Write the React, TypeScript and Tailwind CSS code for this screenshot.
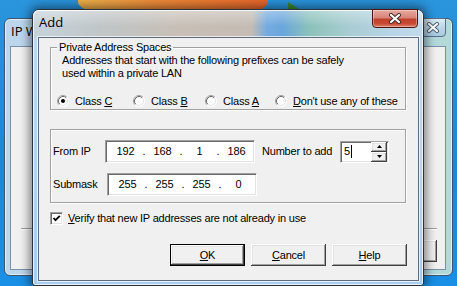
import React from 'react';

const ui = "[font-family:'Liberation_Sans',Arial,sans-serif] text-[11px] leading-[13px] tracking-[-0.2px] text-black";
const sunken =
  'bg-white border border-t-[#a0a0a0] border-l-[#a0a0a0] border-b-white border-r-white shadow-[inset_1px_1px_0_#696969,inset_-1px_-1px_0_#e3e3e3]';
const raised =
  'bg-[#f0f0f0] shadow-[inset_-1px_-1px_0_#404040,inset_1px_1px_0_#ffffff,inset_-2px_-2px_0_#a0a0a0,inset_2px_2px_0_#e3e3e3]';

const Radio = ({ checked }: { checked?: boolean }) => (
  <svg width="12" height="12" viewBox="0 0 12 12" className="shrink-0">
    <circle cx="6" cy="6" r="5.5" fill="#fff" />
    <path d="M2.11 9.89A5.5 5.5 0 0 1 9.89 2.11" fill="none" stroke="#a0a0a0" />
    <path d="M9.89 2.11A5.5 5.5 0 0 1 2.11 9.89" fill="none" stroke="#ffffff" />
    <path d="M2.82 9.18A4.5 4.5 0 0 1 9.18 2.82" fill="none" stroke="#696969" />
    <path d="M9.18 2.82A4.5 4.5 0 0 1 2.82 9.18" fill="none" stroke="#e3e3e3" />
    {checked && <circle cx="6" cy="6" r="2" fill="#000" />}
  </svg>
);

const RadioItem = ({ label, u, rest, checked, w }: { label?: string; u: string; rest?: string; checked?: boolean; w: string }) => (
  <div className={`flex items-center gap-[6px] ${w}`}>
    <Radio checked={checked} />
    <span className="whitespace-nowrap">
      {label}
      <u>{u}</u>
      {rest}
    </span>
  </div>
);

const IpBox = ({ parts }: { parts: string[] }) => (
  <div className={`${sunken} h-[23px] w-[150px] flex items-center pl-[6px]`}>
    {parts.map((p, i) => (
      <React.Fragment key={i}>
        {i > 0 && <span className="w-[10px] text-center">.</span>}
        <span className="w-[27px] text-center">{p}</span>
      </React.Fragment>
    ))}
  </div>
);

const Btn = ({ u, rest, def }: { u: string; rest: string; def?: boolean }) => (
  <div className={`${raised} w-[75px] h-[22px] flex items-center justify-center ${def ? 'border border-black' : ''}`}>
    <span>
      <u>{u}</u>
      {rest}
    </span>
  </div>
);

const CloseX = ({ color, outline }: { color: string; outline: string }) => (
  <svg width="14" height="11" viewBox="0 0 14 11">
    <path d="M3 2L11 9M11 2L3 9" stroke={outline} strokeWidth="4" strokeLinecap="round" />
    <path d="M3 2L11 9M11 2L3 9" stroke={color} strokeWidth="2.2" strokeLinecap="round" />
  </svg>
);

const BackWindow = () => (
  <div className="absolute left-[4px] top-[18px] w-[449px] h-[258px] rounded-[6px] border border-[#3a5670] bg-[linear-gradient(90deg,#bcd6ec_0%,#b4d2ee_85%,#b2dad4_100%)] shadow-[inset_0_0_0_1px_rgba(255,255,255,0.6)]">
    {/* only the start of the title shows left of the Add dialog */}
    <div className="w-[27px] overflow-hidden whitespace-nowrap [font-family:'Open_Sans',sans-serif] text-[13px] leading-[17px] ml-[6px] mt-[4px] text-black">IP W</div>
    <div className="absolute right-[6px] top-[-1px] w-[26px] h-[19px] rounded-b-[4px] border border-[#5a7088] bg-[linear-gradient(180deg,#dcebf4_0%,#bcd6e8_50%,#a8cce0_100%)] flex items-center justify-center">
      <CloseX color="#ffffff" outline="#4a5a6a" />
    </div>
    <div className="absolute left-[5px] top-[27px] right-[6px] bottom-[5px] border border-[#7890a8] bg-[#f0f0f0]">
      <div className="absolute left-[10px] right-[8px] top-[181px] h-[2px] border-t border-t-[#a0a0a0] border-b border-b-white" />
      <div className={`${raised} absolute right-[8px] top-[193px] w-[75px] h-[22px]`} />
    </div>
  </div>
);

const Dialog = () => (
  <div className="absolute left-[32px] top-[9px] w-[392px] h-[277px] rounded-t-[7px] rounded-b-[3px] border border-[#27323c] bg-[linear-gradient(180deg,#c2d8ec_0%,#b6d2ee_60%,#a6ccef_100%)] shadow-[0_0_10px_3px_rgba(0,0,0,0.45),inset_0_0_0_1px_rgba(255,255,255,0.75)] flex flex-col pl-[5px] pr-[4px] pb-[4px]">
    <div className="-ml-[5px] -mr-[4px] h-[27px] rounded-t-[6px] bg-[linear-gradient(180deg,rgba(255,255,255,0.35)_0%,rgba(255,255,255,0)_60%),linear-gradient(90deg,#c6d3dc_0%,#c0c6c8_17%,#c8bfb6_38%,#c4bcb4_56%,#74abe0_60%,#6aa6dc_64%,#8cc2ba_71%,#a6ccd0_80%,#b8d4e6_92%,#c2daec_100%)] shadow-[inset_0_1px_0_rgba(255,255,255,0.8),inset_1px_0_0_rgba(255,255,255,0.7),inset_-1px_0_0_rgba(255,255,255,0.7)] pl-[6px] pt-[4px]">
      <div className="[font-family:'Open_Sans',sans-serif] text-[13px] leading-[17px] text-black">Add</div>
    </div>
    <div className="absolute right-[5px] top-[-1px] w-[46px] h-[19px] rounded-b-[4px] border border-[#4a1410] bg-[linear-gradient(180deg,#e7aaa0_0%,#d88478_45%,#c0402c_55%,#c84a34_80%,#e0806a_100%)] shadow-[inset_0_0_0_1px_rgba(255,255,255,0.35)] flex items-center justify-center">
      <CloseX color="#ffffff" outline="#3a2a28" />
    </div>
    <div className={`flex-1 border border-[#5c6c7c] shadow-[0_0_0_1px_rgba(255,255,255,0.7)] bg-[#f0f0f0] flex flex-col pl-[11px] pr-[12px] pt-[3px] ${ui}`}>
      <fieldset className="border border-[#a0a0a0] shadow-[inset_1px_1px_0_#ffffff,1px_1px_0_#ffffff] pl-[11px] pb-[1px]">
        <legend className="ml-[-5px] px-[2px] leading-[13px]">Private Address Spaces</legend>
        <div>Addresses that start with the following prefixes can be safely</div>
        <div>used within a private LAN</div>
        <div className="flex items-center h-[14px] mt-[14px] -ml-[5px]">
          <RadioItem u="C" label="Class " checked w="w-[76px]" />
          <RadioItem u="B" label="Class " w="w-[72px]" />
          <RadioItem u="A" label="Class " w="w-[70px]" />
          <RadioItem u="D" rest="on't use any of these" w="" />
        </div>
      </fieldset>

      <div className="mt-[19px] border border-[#a0a0a0] shadow-[inset_1px_1px_0_#ffffff,1px_1px_0_#ffffff] pl-[2px] pt-[10px] pb-[6px] flex flex-col gap-[10px]">
        <div className="flex items-center">
          <span className="w-[52px]">From IP</span>
          <IpBox parts={['192', '168', '1', '186']} />
          <span className="ml-[7px] w-[78px]">Number to add</span>
          <div className={`${sunken} w-[49px] h-[22px] flex items-center`}>
            <span className="pl-[3px]">5</span>
            <span className="w-px h-[13px] bg-black ml-[1px]" />
            <div className="ml-auto mr-px flex flex-col h-[20px]">
              <div className={`${raised} w-[16px] h-[10px] flex items-center justify-center`}>
                <svg width="5" height="3" viewBox="0 0 5 3"><path d="M2.5 0L5 3H0Z" fill="#000" /></svg>
              </div>
              <div className={`${raised} w-[16px] h-[10px] flex items-center justify-center`}>
                <svg width="5" height="3" viewBox="0 0 5 3"><path d="M0 0H5L2.5 3Z" fill="#000" /></svg>
              </div>
            </div>
          </div>
        </div>
        <div className="flex items-center">
          <span className="w-[54px]">Submask</span>
          <IpBox parts={['255', '255', '255', '0']} />
        </div>
      </div>

      <div className="mt-[9px] flex items-center gap-[5px]">
        <div className={`${sunken} w-[13px] h-[13px] flex items-center justify-center`}>
          <svg width="9" height="9" viewBox="0 0 9 9">
            <path d="M1.5 4L3.5 6.2L7.8 1.8" fill="none" stroke="#000" strokeWidth="1.8" />
          </svg>
        </div>
        <span>
          <u>V</u>erify that new IP addresses are not already in use
        </span>
      </div>

      <div className="mt-[19px] flex justify-end gap-[6px] -mr-[1px]">
        <Btn u="O" rest="K" def />
        <Btn u="C" rest="ancel" />
        <Btn u="H" rest="elp" />
      </div>
    </div>
  </div>
);

export default function App() {
  return (
    <div className="relative w-[457px] h-[286px] overflow-hidden bg-[linear-gradient(180deg,#2a94dc_0%,#1a88d8_60%,#1a8fe6_100%)]">
      <div className="absolute left-[78px] top-[-20px] w-[190px] h-[40px] rounded-b-[45%] bg-[linear-gradient(90deg,#eeb24a_0%,#ef8c3a_40%,#e8662a_100%)]" />
      <div className="absolute left-[288px] top-[2px] w-[22px] h-[14px] bg-[#3c8a30] [clip-path:polygon(0_0,100%_100%,0_100%)]" />
      <BackWindow />
      <Dialog />
    </div>
  );
}
